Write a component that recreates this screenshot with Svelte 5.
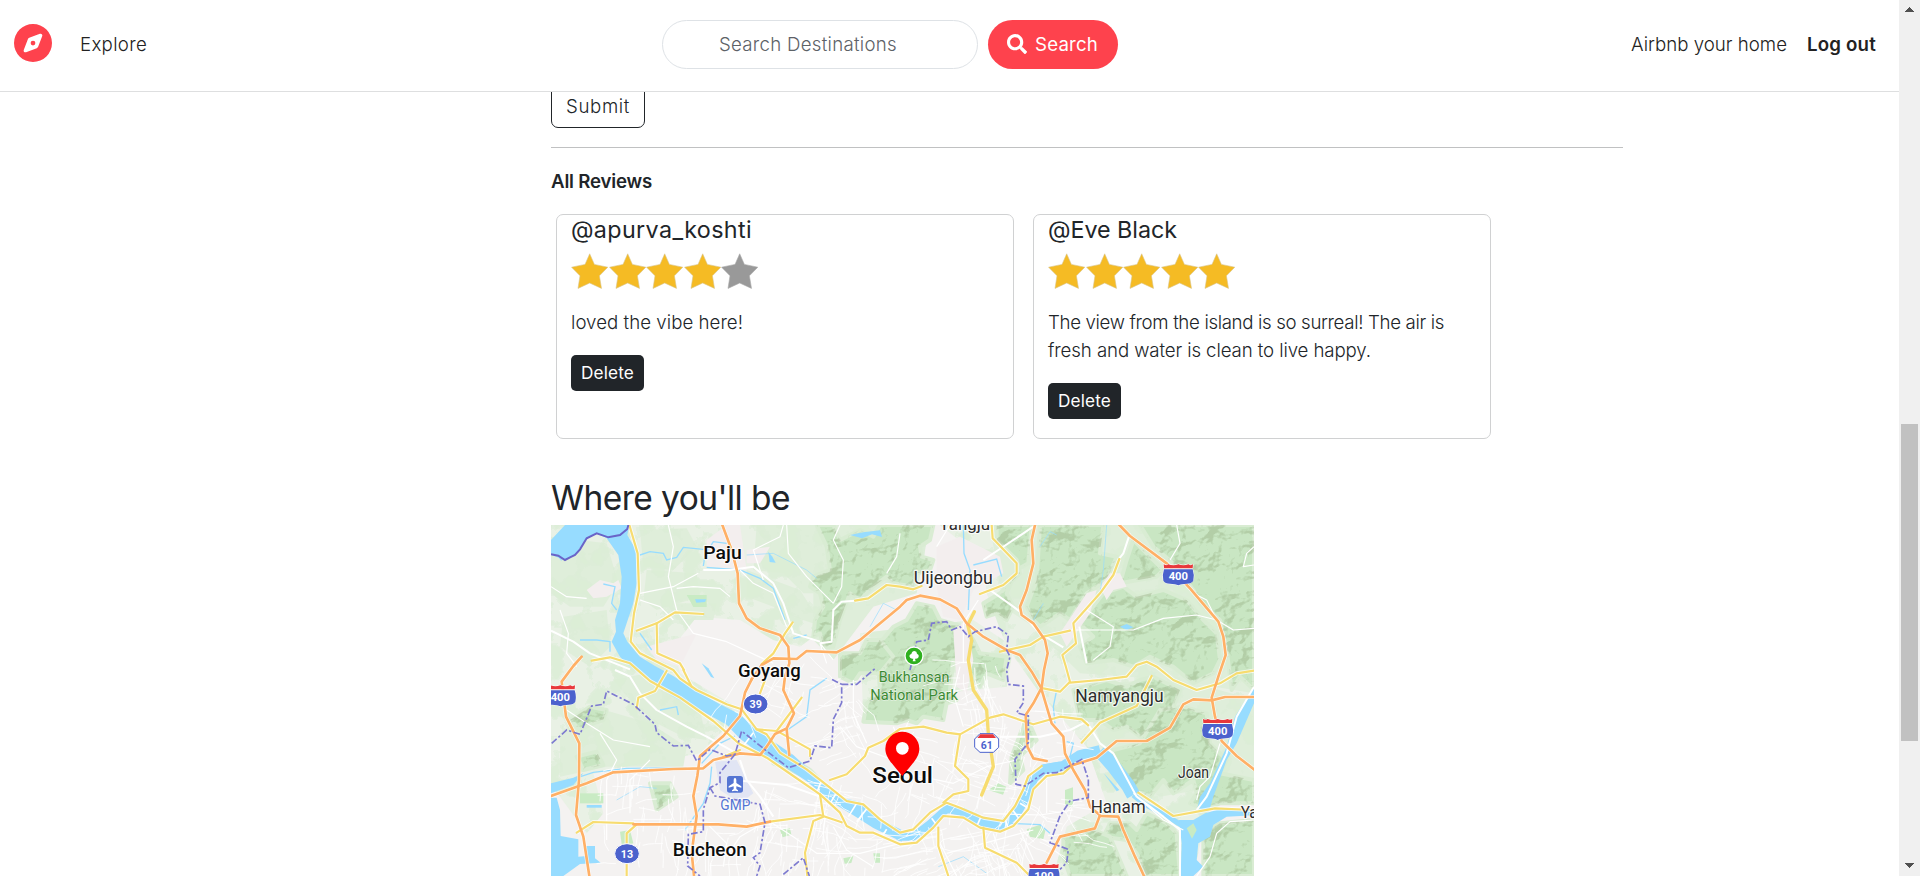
<script>
  const star = 'M18.7 0.8 L23.4 11.4 L36.8 14.2 L28.4 22.8 L30.5 35.4 L18.7 30 L7 35.4 L9 22.8 L0.6 14.2 L14 11.4 Z';

  const reviews = [
    { name: '@apurva_koshti', nameWidth: 181, rating: 4, lines: [['loved the vibe here!', 172]] },
    {
      name: '@Eve Black', nameWidth: 129, rating: 5,
      lines: [['The view from the island is so surreal! The air is', 396], ['fresh and water is clean to live happy.', 323]]
    }
  ];

  // Tracks a line of text so that it fills the given width.
  function fit(node, width) {
    const text = node.placeholder || node.textContent;
    const style = getComputedStyle(node);
    const ctx = document.createElement('canvas').getContext('2d');
    ctx.font = `${style.fontWeight} ${style.fontSize} ${style.fontFamily}`;
    node.style.letterSpacing = `${((width - ctx.measureText(text).width) / text.length).toFixed(3)}px`;
  }

  // Repeatable noise for the side streets.
  function rng(seed) {
    let s = seed;
    return () => ((s = (s * 16807) % 2147483647) / 2147483647);
  }
  function streets(seed, count, x0, y0, w, h, step, angle) {
    const r = rng(seed);
    let d = '';
    for (let i = 0; i < count; i++) {
      let x = x0 + r() * w;
      let y = y0 + r() * h;
      let a = angle + (r() > 0.5 ? Math.PI / 2 : 0);
      d += `M${x.toFixed(0)} ${y.toFixed(0)}`;
      const n = 2 + Math.floor(r() * 4);
      for (let k = 0; k < n; k++) {
        a += (r() - 0.5) * 0.5;
        x += Math.cos(a) * step * (0.5 + r());
        y += Math.sin(a) * step * (0.5 + r());
        d += `L${x.toFixed(0)} ${y.toFixed(0)}`;
      }
    }
    return d;
  }
  const sideStreets = [
    streets(11, 75, 620, 960, 420, 270, 24, 0.2),
    streets(23, 60, 1130, 1100, 330, 140, 30, 1.25),
    streets(37, 55, 1080, 780, 330, 230, 26, 0.4),
    streets(41, 30, 1400, 1000, 220, 150, 26, 0.3),
    streets(53, 45, 170, 900, 290, 320, 22, 0),
    streets(67, 26, 870, 650, 90, 230, 24, 1.2),
    streets(71, 25, 1260, 600, 130, 160, 26, 1.4),
    streets(83, 15, 560, 590, 280, 190, 30, 0.5),
    streets(97, 14, 1440, 740, 180, 160, 26, 0.2),
    streets(103, 16, 480, 1080, 180, 150, 28, 0)
  ].join('');

  const paleGreen = [
    'M33 195H1160L1150 330 1080 400 900 470 780 560 700 540 600 480 470 470 400 560 420 640 620 760 560 800 480 880 200 930 33 980Z',
    'M1200 195H2142V900L2000 1060 1960 1248H1540L1580 1100 1700 1030 1640 860 1500 700 1400 560 1340 400 1330 300Z',
    'M960 520L1300 480 1420 560 1400 680 1200 700 1130 790 970 780Z',
    'M33 980L160 940 190 1060 140 1120 60 1010Z'
  ];
  const mint = [
    'M33 230L200 250 235 370 190 440 90 440 33 400Z', 'M300 210L440 205 470 260 400 330 310 320Z',
    'M320 330L470 340 480 410 350 450 310 420Z', 'M650 195H870L920 290 880 400 790 400 730 340 640 330Z',
    'M620 330L780 390 850 500 760 470 700 440 620 410Z', 'M70 470L200 450 210 560 150 620 60 560Z',
    'M220 660L320 640 480 750 500 840 430 830 350 790 270 720Z', 'M60 820L160 740 330 790 440 860 430 920 200 920 60 950Z',
    'M380 430L530 430 520 480 410 480Z', 'M820 195H1170L1130 400 1000 440 880 600 820 540Z',
    'M1350 195H2142V700L1900 660 1620 640 1480 500 1390 440Z', 'M1620 680L1900 650 2142 720V960L1860 1010 1700 900Z'
  ];
  const hills = [
    'M830 195H880L900 240 960 210 1000 230 1020 195H1180L1170 240 1140 260 1145 290 1180 300 1170 330 1130 340 1120 380 1060 370 1040 350 1000 380 960 420 930 400 900 480 880 560 850 560 840 520 820 530 825 480 850 440 840 400 810 380 820 350 870 330 860 260Z',
    'M1370 195H1475L1465 310 1430 330 1400 400 1420 440 1400 480 1370 460 1340 470 1330 430 1380 400 1440 340 1430 300 1370 240Z',
    'M1500 195H1690L1680 280 1730 290 1700 360 1640 400 1590 480 1560 460 1500 500 1480 480 1460 440 1490 360Z',
    'M1780 240L1870 330 1850 350 1740 370 1760 300Z',
    'M1800 195H2142V690L2100 650 2075 690 2060 570 2040 480 1980 430 1960 390 1900 310 1840 260Z',
    'M1690 400L1750 380 1790 410 1870 390 1940 420 1990 480 2030 520 2040 600 2020 640 1960 670 1900 620 1870 610 1830 590 1780 620 1720 600 1640 610 1620 560 1660 530 1620 490Z',
    'M1010 560L1060 500 1100 480 1130 430 1180 440 1200 480 1270 500 1300 540 1320 580 1400 590 1390 660 1340 640 1320 680 1290 640 1240 600 1230 690 1250 720 1220 730 1210 780 1150 770 1130 790 1100 780 1070 790 970 785 980 730 1020 690Z',
    'M900 580L960 580 980 540 1020 540 1060 590 1020 640 960 640 940 670 900 650Z',
    'M1600 690L1700 660 1760 680 1800 660 1840 650 1920 690 1900 740 1860 780 1800 830 1760 800 1720 810 1680 780 1620 780Z',
    'M1860 750L1930 740 2000 760 2010 850 2060 900 2040 940 2142 960V1030L2040 1030 2000 1050 1950 1030 1970 1000 1960 960 1900 1000 1870 960 1830 1010 1780 990 1740 930 1690 890 1720 870 1800 850Z',
    'M1690 1130L1710 1090 1770 1090 1790 1110 1820 1060 1880 1090 1910 1120 1920 1248H1820L1790 1180 1760 1140Z', 'M1570 1130L1660 1110 1710 1130 1760 1248H1590L1570 1190Z', 'M1990 1120L2040 1090 2142 1080V1248H1990Z',
    'M1460 770L1490 840 1440 890 1450 930 1410 970 1415 890Z', 'M700 910L760 900 810 930 850 970 800 950Z',
    'M110 890l60 -15 20 40 -60 15z', 'M90 780l60 -40 50 10 -10 30 -30 10 -40 20z', 'M330 970l60 0 20 40 -60 40z'
  ];
  const towns = [
    'M500 240L560 195H600L620 330L500 320Z', 'M140 390L180 360 220 370 235 360 245 385 200 410 160 415Z', 'M620 270L690 260 660 310 620 310Z',
    'M1190 260L1260 230 1380 290 1390 340 1300 390 1260 480 1210 470 1190 380Z', 'M1640 400l30 -10 -20 70 -70 100 -20 -40z',
    'M1240 510L1280 480 1300 600 1280 700 1250 680Z', 'M320 560L470 520 420 620 350 600Z', 'M1680 380l30 -40 30 0 20 40 -40 10 -20 30z'
  ];
  const riverBody = 'M33 285V240L75 195H268L262 225 288 270 288 300 290 370 280 430 260 490 250 520 262 545 300 590 345 618 400 648 470 693 540 733 600 763 640 800 690 838 760 885 830 950 900 1012 960 1025 1010 1072 1085 1110V1145L1000 1104 940 1066 880 1030 800 964 740 924 640 866 600 836 560 794 480 750 400 710 310 650 262 612 240 590 215 545 228 515 225 480 240 430 245 350 235 285 200 235 170 220 140 235 105 285 75 300Z';
  const lake = 'M1917 1080L1960 1080 1995 1060 2050 1045 2142 1052V1066L2060 1070 2020 1095 2010 1130 1975 1150 1970 1200 1990 1220 1960 1248H1922L1925 1150Z';
  const westSea = 'M33 1013H50L60 1050 62 1128 115 1138V1190L140 1188 136 1158H165V1195L182 1208 120 1212 70 1248H33Z';
  const streams = [
    'M300 285L330 275 370 280 380 300 410 292 430 262 490 268', 'M500 322L600 330 660 355 700 385 735 480', 'M490 318L495 285 520 245 560 250',
    'M190 372L225 380 215 430 230 450', 'M120 540L170 540 210 545 210 575', 'M1270 195L1272 280 1290 330 1285 450', 'M1300 315L1370 297 1385 350',
    'M60 970L160 937 260 925 440 923', 'M485 910L540 850 585 828', 'M515 920L510 970 490 1030 435 1110',
    'M742 810L800 770 810 690 860 655', 'M1550 690L1540 740 1545 790', 'M1590 890L1600 850 1580 845',
    'M1410 1090L1500 1094 1530 1120', 'M300 520L335 570', 'M760 535L800 525', 'M360 750L410 740 415 765'
  ];
  const thinStreams = ['M1700 195L1690 330 1680 400', 'M1510 430L1480 480', 'M1195 1220L1270 1190 1340 1240', 'M990 500L1030 430 1070 450', 'M620 285L700 280 800 330 830 355', 'M1500 260L1530 215 1550 225', 'M230 1020L300 980 350 985'];
  const roads = [
    'M33 512L100 545 150 580 270 628', 'M490 330H570L640 320 700 370 730 430 760 520 840 545', 'M840 550L875 545 880 450 905 425 945 422',
    'M1480 200L1420 240 1330 300', 'M1350 390L1420 440 1440 455 1500 520 1570 562',
    'M225 630L270 650 300 700 350 750 440 800 500 830 590 880', 'M1618 500L1640 610', 'M1380 830L1500 830 1590 810 1640 785 1680 850 1720 880 1790 1010',
    'M1790 1010L1870 1070 1920 1110 1920 1248', 'M2142 680L2090 770 2060 880 2000 1010 1970 1050', 'M1770 220L1750 280 1738 295', 'M610 963L740 975 840 1010', 'M600 900L620 960 660 1010 700 1070'
  ];
  const lanes = [
    'M740 195L745 280 800 350 880 430', 'M670 360L640 270 720 230 730 195', 'M475 340L400 380 300 400', 'M385 195L400 260 385 350 410 450 460 520 560 545 700 610',
    'M410 385L460 380 540 385 570 410', 'M600 330L640 370 700 400 740 500', 'M33 380L80 410 140 415', 'M60 450L85 520 80 580 110 620', 'M880 600L840 550 860 610',
    'M1910 195L1920 250 1890 300', 'M1590 510H1780L1870 475 1970 465 2030 480 2080 510 2142 505', 'M1640 450L1720 500 1710 560 1660 600',
    'M900 195L880 240 910 300 905 380 880 430', 'M1315 420L1270 490 1270 610', 'M2142 260L2120 280 2110 320 2142 315', 'M1970 1020L1980 980 2010 950 2040 850',
    'M33 700L80 750 140 790 220 840 330 860', 'M180 820L230 900 200 960 200 1140', 'M330 900L270 960 270 1060', 'M500 1090L560 1150 550 1220', 'M690 1085L760 1130 830 1180 960 1180 1080 1150',
    'M880 1100L920 1170 1000 1220', 'M1060 800L1080 850 1100 940', 'M900 800L950 860 1060 900', 'M940 660L940 760 980 850', 'M1100 940L1240 970 1340 920 1430 900', 'M1220 1180L1480 1110', 'M1200 1150L1250 1248',
    'M1360 1120L1400 1248', 'M1440 1110L1480 1200', 'M1330 1060L1500 1065 1600 1050', 'M1520 960L1520 1060', 'M1780 1000L1870 1080 1930 1110', 'M2142 1080L2070 1085 2030 1120 2010 1190 1970 1248',
    'M1230 195L1190 260', 'M1080 220L1070 290 1040 340', 'M670 1090L600 1130 560 1190', 'M1960 400L2000 420 2030 480', 'M300 420L360 440 400 480', 'M1260 620L1240 700 1270 800'
  ];
  const yellow = [
    'M268 195L293 280 297 390 282 460 272 545 300 580 400 630 420 655 470 690 560 733 605 748 650 808 680 823 720 878 800 928 870 983 920 1023 970 1033 1020 1078 1080 1118 1120 1108 1170 1058 1220 1028 1260 1043 1330 1073 1390 1083 1425 1038 1450 988 1465 948 1505 918',
    'M155 602L210 592 270 610 330 663 420 713 520 783 600 853 680 893 760 948 840 1003 900 1058 920 1098 960 1118 1000 1118 1080 1153 1130 1148 1180 1103 1210 1068 1270 1073 1320 1103 1380 1115 1420 1098 1465 1048 1480 988 1520 948 1570 940 1600 913',
    'M290 512L350 490 405 457 490 462', 'M350 490L352 580 420 610 432 630', 'M758 487L735 520 700 580 665 612', 'M945 422L985 415 1040 375 1080 380 1120 388 1145 378',
    'M1355 195L1358 235 1430 310 1430 340 1390 375 1320 402', 'M1590 512L1510 530 1470 555 1380 575',
    'M1738 297L1720 345 1680 400 1600 490 1608 550 1567 585 1577 618 1590 665 1560 695 1510 685', 'M1590 668L1680 660 1760 650 1790 615 1820 605 1850 620 1900 660 1970 690 2040 670 2090 640 2142 632',
    'M870 960L920 943 975 888 985 863 1030 843 1080 807 1150 800 1220 818 1260 823 1350 773 1390 763 1480 793 1560 770 1625 778 1645 796', 'M1260 823L1245 918 1285 958 1285 993 1240 1003 1210 1028',
    'M1625 848L1680 788 1790 738 1835 648', 'M1795 998L1900 1068 2025 1045 2142 1050', 'M1195 1103V1158L1225 1248', 'M1330 1103L1335 1163 1430 1208 1470 1248',
    'M380 633L345 693 295 713 290 745', 'M430 630L455 680', 'M785 713L710 813 650 808', 'M675 660L660 700', 'M720 818L810 868V888', 'M110 1118L160 1086 280 1090', 'M260 1248V1120L290 1093',
    'M690 1085L840 1065 905 1087', 'M840 1003L850 1070 820 1083 795 1178 802 1248', 'M550 890L600 870'
  ];
  const boldYellow = ['M1303 455L1283 495 1295 540 1285 600 1300 690 1340 750 1345 820 1360 920 1325 1005'];
  const orange = [
    'M547 195L575 270 593 340 597 430 620 475 660 505 720 525 745 560 748 610 735 650 730 690 762 760 740 805 705 822 680 860 660 885 600 880 520 900 490 925 400 927 220 937 140 970 33 1008',
    'M635 658L665 615 700 595 770 597 800 573 890 577 960 540 1080 440 1100 420 1140 407 1200 418 1250 445 1280 490 1330 530 1400 570 1440 585 1475 635 1503 683 1535 790 1570 830 1575 880 1600 930 1635 990 1650 1040 1680 1066 1665 1105 1560 1130 1520 1208',
    'M1485 195L1475 240 1480 310 1460 390 1440 440 1445 465 1480 490 1515 540 1523 580 1512 630 1505 683 1480 730 1457 765 1462 860 1480 895 1520 903',
    'M1738 195L1770 228 1880 310 1950 385 2035 485 2050 530 2057 585 2035 650 2015 713 2025 770 2045 843 2090 888 2142 928',
    'M1590 918L1670 893 1730 843 1820 843 1890 803 1930 733 1960 718 2015 721 2055 711H2142', 'M1680 1068L1735 1070 1750 1110 1785 1190 1812 1248',
    'M125 590L100 618 65 665 78 770 118 850 117 960 108 1065 130 1130 148 1248', 'M635 658L615 698 600 768 550 828 480 888 472 948 460 1008 470 1068 455 1178 462 1248',
    'M280 1093H535L620 1100 690 1085', 'M740 808L748 885'
  ];
  const borders = [
    'M35 850L80 810 120 823 155 738 190 733 200 693 280 733 345 793 350 818 400 858 445 856 470 903 510 868 560 888 585 883 605 813 680 873 745 923 810 903 825 858 875 863 880 778 905 728 905 673 870 655 M905 673L950 673 1005 626 M1110 630L1130 545 1165 540 1175 490 1220 485 1235 510 1260 500 1285 530 1305 515 1370 500 1405 525 1400 570 1410 590 1400 630 1405 673 1450 678 1450 728 1430 758 1465 768 1465 848 1425 898 1428 973 1455 978 1510 940 1550 938 1625 898 1645 958 1645 1013 1590 1023 1560 1068 1530 1148 1585 1168 1580 1208 1560 1228',
    'M585 883L540 938 540 968 510 983 490 1048V1115L445 1123 443 1218 480 1248', 'M510 983L525 1008 660 1033 675 1088 660 1178 640 1193 660 1218 650 1248', 'M730 1243L790 1193 808 1248'
  ];
  const bridges = ['M640 818L612 855', 'M845 960L830 1000', 'M888 1000L865 1040', 'M950 1030L925 1070', 'M985 1040L950 1085', 'M1040 1108L1025 1130', 'M1325 1065L1310 1100', 'M1440 1030L1465 1045', 'M1418 1050L1440 1080', 'M1395 1075L1405 1108', 'M1175 1075L1190 1095'];
  const places = [
    { t: 'Paju', x: 490, y: 298, w: 115, s: 57, c: 'city' }, { t: 'Goyang', x: 594, y: 651, w: 188, s: 57, c: 'city' },
    { t: 'Bucheon', x: 398, y: 1188, w: 222, s: 57, c: 'city' }, { t: 'Seoul', x: 997, y: 968, w: 182, s: 68, c: 'city' },
    { t: 'Yangju', x: 1198, y: 209, w: 152, s: 52, c: 'town' }, { t: 'Uijeongbu', x: 1121, y: 373, w: 237, s: 53, c: 'town' },
    { t: 'Namyangju', x: 1606, y: 726, w: 265, s: 53, c: 'town' }, { t: 'Hanam', x: 1652, y: 1058, w: 165, s: 53, c: 'town' },
    { t: 'Joan', x: 1914, y: 954, w: 93, s: 48, c: 'town' }, { t: 'Yangpyeong', x: 2102, y: 1074, w: 250, s: 48, c: 'town' },
    { t: 'Bukhansan', x: 1016, y: 667, w: 212, s: 43, c: 'park' }, { t: 'National Park', x: 991, y: 720, w: 263, s: 43, c: 'park' },
    { t: 'GMP', x: 541, y: 1049, w: 90, s: 45, c: 'airport' }
  ];
  const interstates = [[1915, 344, '400'], [61, 707, '400'], [2033, 808, '400'], [1512, 1243, '100']];
</script>

<div class="window">
  <div class="page">
    <header>
      <div class="left">
        <svg class="logo" viewBox="0 0 512 512" aria-hidden="true">
          <path fill="#fe424d" d="M256 512A256 256 0 1 0 256 0a256 256 0 1 0 0 512zm50.700-186.900L162.400 380.600c-19.400 7.500-38.500-11.600-31-31l55.500-144.300c3.300-8.500 9.900-15.100 18.400-18.400l144.300-55.500c19.400-7.500 38.500 11.600 31 31L325.100 306.700c-3.200 8.500-9.900 15.100-18.400 18.400zM288 256a32 32 0 1 0-64 0 32 32 0 1 0 64 0z" />
        </svg>
        <a class="link" href="#explore" use:fit={67}>Explore</a>
      </div>
      <form class="search">
        <input type="text" placeholder="Search Destinations" use:fit={178} />
        <button type="button">
          <svg viewBox="0 0 512 512" aria-hidden="true">
            <path fill="#fff" d="M505 442.700L405.300 343c-4.500-4.500-10.600-7-17-7H372c27.600-35.300 44-79.700 44-128C416 93.100 322.900 0 208 0S0 93.100 0 208s93.100 208 208 208c48.300 0 92.700-16.400 128-44v16.300c0 6.400 2.500 12.500 7 17l99.700 99.700c9.400 9.400 24.600 9.400 33.900 0l28.300-28.300c9.400-9.400 9.400-24.600.1-34zM208 336c-70.700 0-128-57.200-128-128 0-70.700 57.200-128 128-128 70.700 0 128 57.200 128 128 0 70.700-57.200 128-128 128z" />
          </svg>
          <span use:fit={63}>Search</span>
        </button>
      </form>
      <nav>
        <a class="link" href="#host" use:fit={156}>Airbnb your home</a>
        <a class="link strong" href="#logout" use:fit={69}>Log out</a>
      </nav>
    </header>

    <main>
      <button class="submit" type="button"><span use:fit={64}>Submit</span></button>
      <hr />
      <p class="label"><b use:fit={101}>All Reviews</b></p>
      <section class="reviews">
        {#each reviews as r}
          <article>
            <h5><span use:fit={r.nameWidth}>{r.name}</span></h5>
            <div class="stars">
              {#each Array(5) as _, i}
                <svg viewBox="0 0 37.5 37" aria-hidden="true">
                  <path d={star} fill={i < r.rating ? '#f5bb24' : '#999'} stroke={i < r.rating ? '#d9c58a' : '#aaa'} stroke-width=".6" stroke-linejoin="round" />
                </svg>
              {/each}
            </div>
            <p class="comment">
              {#each r.lines as [line, width]}<span use:fit={width}>{line}</span>{/each}
            </p>
            <button class="delete" type="button"><span use:fit={53}>Delete</span></button>
          </article>
        {/each}
      </section>

      <h3><span use:fit={239}>Where you'll be</span></h3>
      <svg class="map" viewBox="33 195 2109 1053" aria-label="Map">
        <defs>
          <filter id="relief" x="0" y="0" width="100%" height="100%" color-interpolation-filters="sRGB">
            <feTurbulence type="fractalNoise" baseFrequency="0.011 0.013" numOctaves="4" seed="8" result="n" />
            <feDiffuseLighting in="n" surfaceScale="26" diffuseConstant="1.05" lighting-color="#fff" result="l">
              <feDistantLight azimuth="225" elevation="62" />
            </feDiffuseLighting>
            <feColorMatrix in="l" values="0 0 0 0 .56  0 0 0 0 .66  0 0 0 0 .48  -3 0 0 0 2.65" />
            <feComponentTransfer><feFuncA type="discrete" tableValues="0 .08 .16 .24 .32 .38" /></feComponentTransfer>
            <feComposite operator="in" in2="SourceGraphic" />
          </filter>
          <filter id="fields" x="0" y="0" width="100%" height="100%" color-interpolation-filters="sRGB">
            <feTurbulence type="fractalNoise" baseFrequency="0.014" numOctaves="4" seed="21" />
            <feColorMatrix values="0 0 0 0 .86  0 0 0 0 .93  0 0 0 0 .84  0 6 0 0 -2.9" />
            <feComponentTransfer><feFuncA type="discrete" tableValues="0 .5 .7 .9" /></feComponentTransfer>
            <feComposite operator="in" in2="SourceGraphic" />
          </filter>
        </defs>
        <rect x="33" y="195" width="2109" height="1053" fill="#f4f2f1" />
        <g fill="#e9f1e5">{#each paleGreen as d}<path {d} />{/each}</g>
        <g fill="#dfeeda">{#each mint as d}<path {d} />{/each}</g>
        <g fill="#fff" filter="url(#fields)">{#each paleGreen as d}<path {d} />{/each}</g>
        <g fill="#c9e6c3" stroke="#d9ecd3" stroke-width="12" stroke-linejoin="round">{#each hills as d}<path {d} />{/each}</g>
        <g fill="#fff" filter="url(#relief)">{#each hills as d}<path {d} />{/each}</g>
        <g fill="#f3eeee">{#each towns as d}<path {d} />{/each}</g>
        <path d="M525 905L590 900 640 1000 600 1030 540 990Z" fill="#e1e5f4" />
        <g fill="#c9ebc4">
          <path d="M1460 1108l40 -14 16 18 -6 26 -40 -8z" /><path d="M720 1110l30 -6 4 20 -26 8z" />
          <path d="M1575 990l24 -8 0 60 -24 -6z" /><path d="M910 1195l30 -6 -6 20 -20 2z" /><path d="M120 1000h70v30h-70z" /><path d="M240 1115l30 -5 10 40 -34 10z" />
          <path d="M1000 1180l20 0 0 28 -16 0z" /><path d="M440 405h60v36h-40z" /><path d="M1345 990l30 -20 24 10 -10 24z" />
        </g>
        <g class="water">
          <path d={riverBody} /><path d={lake} /><path d={westSea} />
          <path d="M33 970L100 953 130 940 100 975 33 1000Z" />
          <path d="M1980 1010L1972 1045 2008 1050 2020 1010 2060 900 2090 850 2142 730V680L2085 770 2060 860 2010 970Z" />
          <path d="M685 275l12 15 10 18 -18 -2z" /><path d="M930 225l40 -8 50 -6 6 20 -30 -8 -30 12z" /><path d="M465 418l34 0 -4 8 -26 2z" />
          <path d="M1740 500l20 -8 20 10 -20 8z" /><path d="M485 610l20 15 18 30 -10 -4z" /><path d="M1690 938l48 52 -8 4z" /><path d="M140 1035h45v8h-45z" />
          <path d="M50 285l18 6 -4 12z" />
        </g>
        <g class="flow">
          <path stroke-width="24" d="M1070 1130L1120 1130 1170 1092 1220 1047 1270 1056" />
          <path stroke-width="30" d="M1265 1055L1330 1085 1385 1097 1432 1055 1463 998 1480 955 1510 928 1560 920" />
          <path stroke-width="30" d="M1510 928L1570 918 1620 885 1680 870" />
          <path stroke-width="42" d="M1680 873L1720 918 1765 978 1780 1005" />
          <path stroke-width="16" d="M1780 1005L1810 1030 1870 1062 1940 1105" />
        </g>
        <path d="M1940 1105l20 -15 10 20 -14 26z" fill="#c9ebc4" />
        <g class="stream">{#each streams as d}<path {d} />{/each}</g>
        <g class="stream thin">{#each thinStreams as d}<path {d} />{/each}</g>
        <path class="side" d={sideStreets} />
        <g class="road">{#each roads as d}<path {d} />{/each}</g>
        <g class="road lane">{#each lanes as d}<path {d} />{/each}</g>
        <g class="bridge">{#each bridges as d}<path {d} />{/each}</g>
        <g class="casing">{#each [...yellow, ...orange] as d}<path {d} />{/each}</g>
        <g class="yellow">{#each yellow as d}<path {d} />{/each}</g>
        <g class="yellow bold">{#each boldYellow as d}<path {d} />{/each}</g>
        <g class="orange">{#each orange as d}<path {d} />{/each}</g>
        <path class="coast" d="M33 283L55 287 75 300 90 292 105 285 120 268 140 235 170 220 205 232 240 225 262 207 265 195" />
        <g class="border">{#each borders as d}<path {d} />{/each}</g>

        {#each interstates as [x, y, t]}
          <g transform="translate({x} {y})">
            <path d="M-44 -31Q-36 -26 -30 -31Q-15 -25 0 -31Q15 -25 30 -31Q36 -26 44 -31L43 -19H-43Z" fill="#e8383b" stroke="#fff" stroke-width="3" paint-order="stroke" />
            <path d="M-43 -16H43Q49 2 45 18Q40 27 25 27Q8 27 0 32Q-8 27 -25 27Q-40 27 -45 18Q-49 2 -43 -16Z" fill="#4b62cd" stroke="#fff" stroke-width="3" paint-order="stroke" />
            <text class="shield" y="17" textLength="58" lengthAdjust="spacingAndGlyphs">{t}</text>
          </g>
        {/each}
        {#each [[647, 732, '39'], [261, 1181, '13']] as [x, y, t]}
          <ellipse cx={x} cy={y} rx="37" ry="30" fill="#4b62cd" stroke="#fff" stroke-width="3" />
          <text class="shield" {x} y={y + 12} textLength="37" lengthAdjust="spacingAndGlyphs">{t}</text>
        {/each}
        <path d="M1320 821H1360L1376 837V862L1360 877H1320L1304 862V837Z" fill="#fff" stroke="#4b62cd" stroke-width="3" />
        <path d="M1321 823H1359L1368 834H1312Z" fill="#e8383b" />
        <text class="shield blue" x="1340" y="867" textLength="36" lengthAdjust="spacingAndGlyphs">61</text>

        <circle cx="1122" cy="588" r="27" fill="#2fb01f" stroke="#fff" stroke-width="4" />
        <path d="M1118 604L1120 596Q1110 598 1108 589Q1108 583 1114 582Q1116 573 1123 573Q1131 574 1131 581Q1138 584 1136 591Q1133 598 1125 596L1127 604Z" fill="#fff" />
        <rect x="561" y="948" width="48" height="50" rx="8" fill="#5475d3" />
        <path d="M585 954Q589 954 589 961V969L604 979V983L589 979V987L594 991V994L585 992L576 994V991L581 987V979L566 983V979L581 969V961Q581 954 585 954Z" fill="#fff" />

        {#each places as p}
          <text class="place {p.c}" x={p.x} y={p.y} font-size={p.s} textLength={p.w} lengthAdjust="spacingAndGlyphs">{p.t}</text>
        {/each}
        <path d="M1087 815A51 51 0 0 1 1138 866C1138 894 1112 916 1087 948C1062 916 1036 894 1036 866A51 51 0 0 1 1087 815Z" fill="#f00" />
        <circle cx="1087" cy="865" r="19" fill="#fff" />
      </svg>
    </main>
  </div>
  <aside class="scrollbar">
    <svg viewBox="0 0 9 5" shape-rendering="crispEdges"><path d="M0 5L4.500 0 9 5Z" fill="#505050" /></svg>
    <div class="thumb"></div>
    <svg viewBox="0 0 9 5" shape-rendering="crispEdges"><path d="M0 0L4.500 5 9 0Z" fill="#505050" /></svg>
  </aside>
</div>

<style>
  :global(body) { margin: 0; background: #fff; overflow: hidden; }
  .window, .window * { box-sizing: border-box; }
  .window { display: flex; height: 876px; overflow: hidden; font: 300 18.670px/28px Inter, sans-serif; color: #212529; }
  .page { flex: 1; min-width: 0; display: flex; flex-direction: column; overflow: hidden; }
  button, input { font: inherit; color: inherit; margin: 0; }
  a { text-decoration: none; color: #222; }
  span, b, a { white-space: nowrap; }

  header { flex: none; height: 92px; display: grid; grid-template-columns: 662px 1fr auto; align-items: center; border-bottom: 1px solid #dedfe0; background: #fff; padding: 0 23px 1px 0; }
  .left { display: flex; align-items: center; gap: 28px; padding-left: 14px; }
  .logo { width: 38px; height: 38px; margin-top: -5px; }
  .search { display: flex; gap: 10px; height: 49px; margin-bottom: 2px; }
  .search input { width: 316px; border: 1px solid #dee2e6; border-radius: 25px; padding: 2px 14px 0 56px; outline: 0; background: #fff; }
  .search input::placeholder { color: #5d6267; opacity: 1; }
  .search button { width: 130px; display: flex; align-items: center; gap: 9px; padding: 0 0 0 19px; border: 0; border-radius: 25px; background: #fe424d; color: #fff; font-weight: 400; }
  .search button span { padding-top: 2px; }
  .search svg { width: 20px; height: 20px; flex: none; margin-right: -1px; }
  nav { display: flex; gap: 20px; }
  .strong, b { font-weight: 600; }

  main { flex: 1; min-height: 0; overflow: hidden; padding-left: 551px; display: flex; flex-direction: column; align-items: flex-start; }
  .submit { flex: none; height: 44px; margin-top: -8px; width: 94px; border: 1px solid #212529; border-radius: 7px; background: #fff; padding: 2px 0 0 14px; text-align: left; }
  hr { flex: none; width: 1072px; height: 1px; margin: 19px 0 0; border: 0; background: #c0c1c2; }
  .label { margin: 20px 0 0; height: 27px; }
  .reviews { display: flex; gap: 19px; margin: 19px 0 0 5px; }
  article { width: 458px; height: 225px; flex: none; border: 1px solid #d0d1d2; border-radius: 7px; padding: 0 14px; display: flex; flex-direction: column; align-items: flex-start; }
  h5 { margin: 0; font-size: 23.300px; line-height: 30px; font-weight: 400; }
  .stars { display: flex; height: 37px; margin-top: 8px; }
  .stars svg { width: 37.500px; height: 37px; }
  .comment { margin: 19px 0 0; display: flex; flex-direction: column; align-items: flex-start; }
  .delete { margin-top: 18px; height: 36px; width: 73px; border: 0; border-radius: 5px; background: #212529; color: #fff; font-size: 17.200px; line-height: 24px; font-weight: 400; padding: 0 0 0 10px; text-align: left; }
  h3 { margin: 38px 0 0; height: 48px; font-size: 33.500px; line-height: 42px; font-weight: 400; }
  .map { flex: none; width: 703px; height: 351px; display: block; overflow: hidden; }

  .water path { fill: #97dcff; }
  .flow path { fill: none; stroke: #97dcff; stroke-linejoin: round; }
  .stream path { fill: none; stroke: #97dcff; stroke-width: 4; }
  .thin path { stroke-width: 2; }
  .side { fill: none; stroke: #fff; stroke-width: 2.500; }
  .road path { fill: none; stroke: #fff; stroke-width: 6; stroke-linejoin: round; }
  .lane path { stroke-width: 3.500; }
  .bridge path { fill: none; stroke: #fff; stroke-width: 5; }
  .casing path { fill: none; stroke: #fff; stroke-width: 12; stroke-linejoin: round; opacity: .75; }
  .yellow path { fill: none; stroke: #f7dc6f; stroke-width: 6.500; stroke-linejoin: round; stroke-linecap: round; }
  .bold path { stroke-width: 10; }
  .orange path { fill: none; stroke: #ffb066; stroke-width: 8; stroke-linejoin: round; stroke-linecap: round; }
  .coast { fill: none; stroke: #6a64c8; stroke-width: 6; }
  .border path { fill: none; stroke: #7d7ad0; stroke-width: 5; stroke-dasharray: 20 7 7 7; }
  .place { font-family: Roboto, sans-serif; paint-order: stroke; stroke: #fff; stroke-width: 7; stroke-linejoin: round; stroke-opacity: .8; }
  .city { font-weight: 500; fill: #0c0c0c; }
  .town { font-weight: 400; fill: #2c2c2c; }
  .park { font-weight: 400; fill: #3b8a33; stroke-width: 4; stroke-opacity: .5; }
  .airport { font-weight: 400; fill: #5475d3; }
  .shield { font: 700 35px Roboto, sans-serif; fill: #fff; text-anchor: middle; }
  .blue { fill: #4b62cd; }

  .scrollbar { width: 21px; flex: none; background: #f0f0f0; display: flex; flex-direction: column; align-items: center; padding: 7px 2px 8px; }
  .scrollbar svg { width: 9px; height: 5px; flex: none; }
  .thumb { width: 17px; height: 317px; background: #c1c1c1; margin: 412px 0 auto; }
</style>
